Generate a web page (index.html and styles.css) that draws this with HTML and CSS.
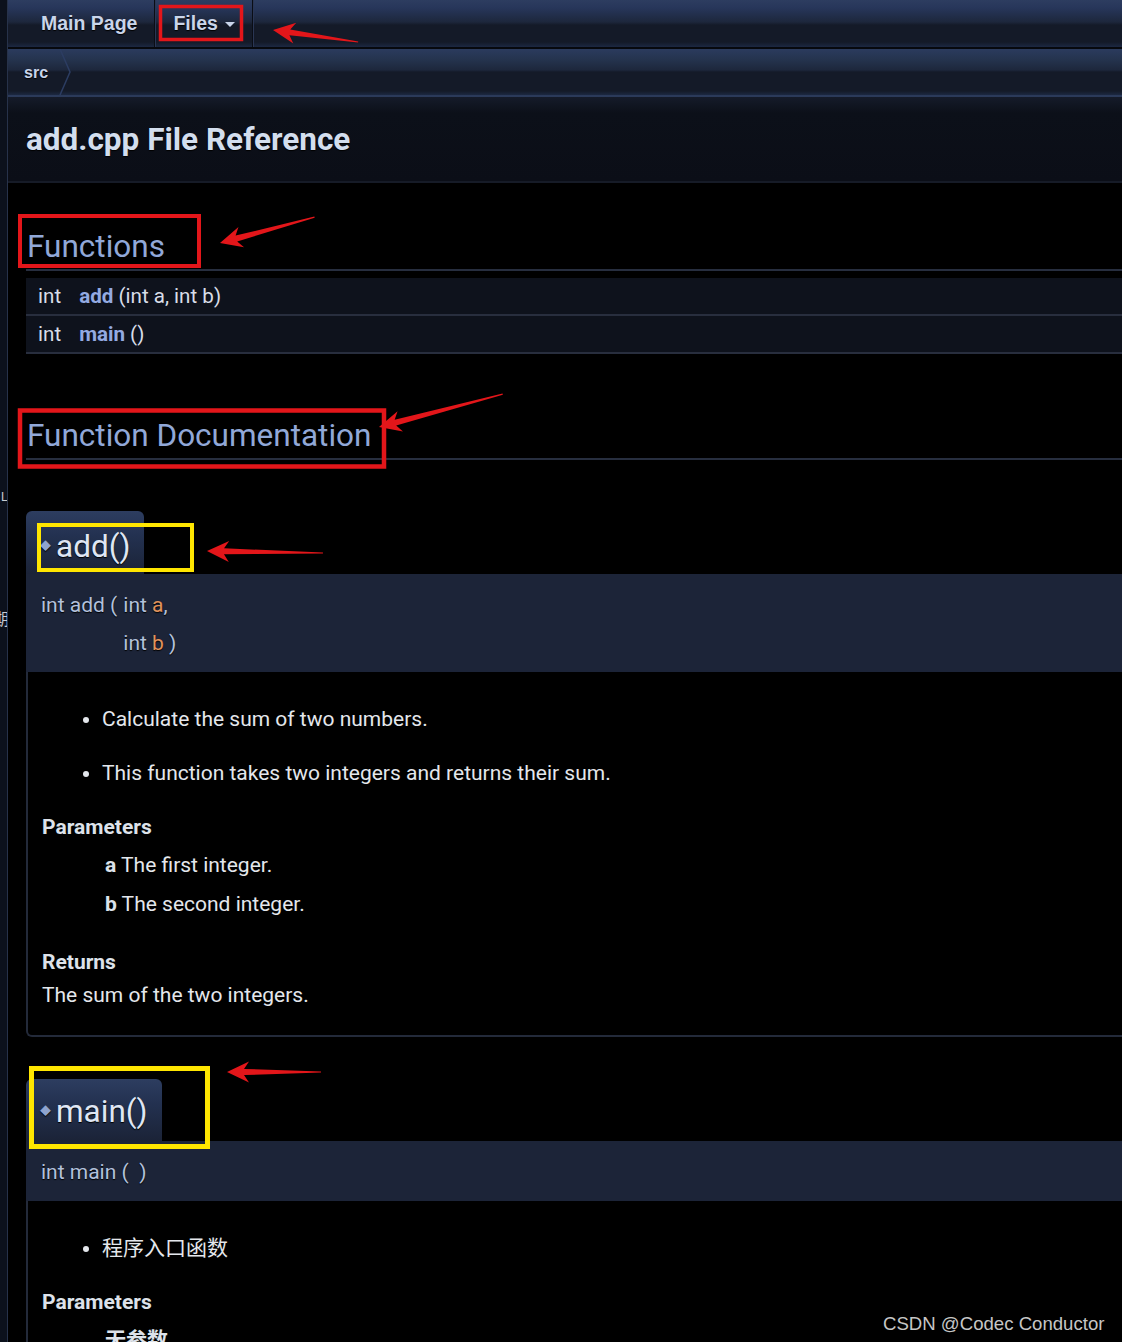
FILE: index.html
```html
<!DOCTYPE html>
<html lang="en">
<head>
<meta charset="utf-8">
<title>add.cpp File Reference</title>
<link rel="stylesheet" href="styles.css">
</head>
<body>
<div class="page">
  <aside class="side">
    <span class="side-l">L</span>
    <span class="side-c">期</span>
  </aside>
  <div class="main">
    <nav class="navbar">
      <a class="tab tab-main">Main Page</a>
      <a class="tab tab-files">Files <span class="caret"></span></a>
    </nav>
    <div class="crumbs">
      <span class="crumb">src</span>
      <svg class="chev" width="14" height="46" viewBox="0 0 14 46"><polyline points="3,0 13,23 3,46" fill="none" stroke="#2c3d62" stroke-width="1.5"/></svg>
    </div>
    <div class="header">
      <h1 class="title">add.cpp File Reference</h1>
    </div>
    <div class="contents">
      <h2 class="groupheader g-func">Functions</h2>
      <table class="memberdecls">
        <tr><td class="mleft">int</td><td class="mright"><b class="mname">add</b> (int a, int b)</td></tr>
        <tr><td class="mleft">int</td><td class="mright"><b class="mname">main</b> ()</td></tr>
      </table>

      <h2 class="groupheader g-doc">Function Documentation</h2>

      <div class="memitem m-add">
        <h3 class="memtitle"><span class="permalink">◆</span>add()</h3>
        <div class="memproto">
          <div class="protogrid">
            <span class="pt">int add (</span><span>int <em class="pname">a</em>,</span>
            <span></span><span>int <em class="pname">b</em> )</span>
          </div>
        </div>
        <div class="memdoc">
          <ul class="bul">
            <li>Calculate the sum of two numbers.</li>
            <li>This function takes two integers and returns their sum.</li>
          </ul>
          <dl class="params">
            <dt>Parameters</dt>
            <dd>
              <div class="prow"><b>a</b> The first integer.</div>
              <div class="prow"><b>b</b> The second integer.</div>
            </dd>
          </dl>
          <dl class="ret">
            <dt>Returns</dt>
            <dd>The sum of the two integers.</dd>
          </dl>
        </div>
      </div>

      <div class="memitem m-main">
        <h3 class="memtitle"><span class="permalink">◆</span>main()</h3>
        <div class="memproto">
          <div class="protoline">int main (&nbsp; )</div>
        </div>
        <div class="memdoc">
          <ul class="bul">
            <li>程序入口函数</li>
          </ul>
          <dl class="params">
            <dt>Parameters</dt>
            <dd>
              <div class="prow"><b>无参数</b></div>
            </dd>
          </dl>
        </div>
      </div>
    </div>
  </div>
</div>

<svg class="annot" width="1122" height="1342" viewBox="0 0 1122 1342">
  <g fill="none" stroke="#e3161a">
    <rect x="160.5" y="6.5" width="81" height="33" stroke-width="3.5"/>
    <rect x="20" y="216" width="179" height="50" stroke-width="4"/>
    <rect x="20" y="410.5" width="364" height="56" stroke-width="4.5"/>
  </g>
  <g fill="none" stroke="#ffe600">
    <rect x="39" y="525" width="153" height="45" stroke-width="4"/>
    <rect x="31.5" y="1068.5" width="176" height="78" stroke-width="5"/>
  </g>
  <g fill="#e3161a">
    <polygon transform="translate(273,30) rotate(8.04)" points="0,0 22,-10.5 17,-3 86,-0.6 86,0.6 17,3 22,10.5"/>
    <polygon transform="translate(220,243) rotate(-15.3)" points="0,0 22,-10.5 17,-3 98,-0.6 98,0.6 17,3 22,10.5"/>
    <polygon transform="translate(379,427) rotate(-14.9)" points="0,0 22,-10.5 17,-3 128,-0.6 128,0.6 17,3 22,10.5"/>
    <polygon transform="translate(207,551) rotate(1)" points="0,0 22,-10.5 17,-3 116,-0.6 116,0.6 17,3 22,10.5"/>
    <polygon transform="translate(227,1072) rotate(0)" points="0,0 22,-10.5 17,-3 94,-0.6 94,0.6 17,3 22,10.5"/>
  </g>
</svg>

<div class="watermark">CSDN @Codec Conductor</div>
</body>
</html>
```
FILE: styles.css
```css
html, body {
  margin: 0;
  padding: 0;
  background: #000;
}
body {
  position: relative;
  width: 1122px;
  height: 1342px;
  overflow: hidden;
  font-family: Roboto, "Noto Sans CJK SC", sans-serif;
  color: #e4e7ec;
}
.page {
  display: flex;
  min-height: 1342px;
}

/* left strip */
.side {
  width: 7px;
  flex: none;
  background: #0c111c;
  border-right: 1px solid #27324a;
  overflow: hidden;
  display: flex;
  flex-direction: column;
  color: #c9ccd2;
  font-size: 12px;
  line-height: 16px;
  white-space: nowrap;
}
.side-l {
  margin-top: 489px;
  margin-left: 1px;
}
.side-c {
  margin-top: 107px;
  margin-left: -7px;
  font-size: 16px;
}

.main {
  flex: 1;
  min-width: 0;
}

/* nav */
.navbar {
  height: 47px;
  display: flex;
  background: linear-gradient(#2d3d60 0, #27365a 8px, #1d273c 22px, #141a28 25px, #141a28 42px, #1c2842 47px);
  border-bottom: 2px solid #07090e;
  font-family: "Liberation Sans", Arial, sans-serif;
  font-weight: bold;
  font-size: 19.5px;
}
.tab {
  display: flex;
  align-items: center;
  color: #c9d5ea;
  text-shadow: 0 1px 1px #000;
  border-right: 1px solid #0a0d15;
  box-shadow: 1px 0 0 #2a3654;
  padding-bottom: 4px;
}
.tab-main {
  padding: 0 17px 0 33px;
}
.tab-files {
  padding: 0 17px 0 18px;
}
.caret {
  display: inline-block;
  margin-left: 7px;
  margin-top: 2px;
  border-left: 5px solid transparent;
  border-right: 5px solid transparent;
  border-top: 5px solid #c9d5ea;
}

/* breadcrumb */
.crumbs {
  height: 46px;
  display: flex;
  align-items: center;
  background: linear-gradient(#2b3b5e 0, #25344f 10px, #1d273c 21px, #141a28 23px, #141a28 42px, #1c2842 46px);
  border-bottom: 2px solid #2b3a5a;
  font-family: "Liberation Sans", Arial, sans-serif;
  font-weight: bold;
  font-size: 16px;
}
.crumb {
  color: #c9d5ea;
  text-shadow: 0 1px 1px #000;
  padding-left: 16px;
  padding-top: 2px;
  margin-right: 9px;
}
.chev {
  display: block;
}

/* header */
.header {
  height: 86px;
  background: linear-gradient(#151b2a 0, #0c1019 16px, #0b0e17 100%);
  border-bottom: 2px solid #161b27;
  padding-left: 18px;
  box-sizing: border-box;
  padding-top: 24px;
}
.title {
  margin: 0;
  font-size: 31.5px;
  line-height: 37px;
  font-weight: bold;
  color: #d3deee;
  text-shadow: 0 1px 1px #000;
}

/* contents */
.contents {
  padding-left: 18px;
}
.groupheader {
  margin: 0;
  font-weight: normal;
  font-size: 31.5px;
  line-height: 37px;
  color: #91a8d8;
  padding: 0 0 4px 1px;
  border-bottom: 2px solid #272e3f;
}
.g-func {
  margin-top: 45px;
}
.g-doc {
  margin-top: 63px;
}

.memberdecls {
  width: 100%;
  border-collapse: collapse;
  margin-top: 7px;
  font-size: 20.6px;
  color: #d8dde8;
}
.memberdecls td {
  height: 36px;
  background: #0e121c;
  border-bottom: 2px solid #282e3e;
  padding: 0;
  white-space: nowrap;
}
.mleft {
  width: 1px;
  padding: 0 18px 0 12px !important;
}
.mname {
  color: #93aae2;
}

/* member items */
.memitem.m-add {
  margin-top: 51px;
}
.memitem.m-main {
  margin-top: 42px;
}
.memtitle {
  display: inline-flex;
  align-items: center;
  margin: 0;
  font-weight: normal;
  font-size: 31.5px;
  line-height: 37px;
  color: #dfe6f4;
  text-shadow: 0 1px 1px #000;
  background: linear-gradient(#2d3d60 0, #233150 40%, #1b2337 100%);
  border-top-left-radius: 6px;
  border-top-right-radius: 6px;
  padding: 17px 14px 9px 14px;
}
.m-main .memtitle {
  padding-top: 14px;
  padding-bottom: 11px;
}
.permalink {
  font-size: 11px;
  color: #8ea4cf;
  margin-right: 5px;
}
.memproto {
  background: #1c2438;
  padding: 12px 15px 10px 15px;
  font-size: 21px;
  line-height: 38px;
  color: #b3c1dc;
  text-shadow: 0 1px 1px #000;
}
.protogrid {
  display: grid;
  grid-template-columns: auto 1fr;
}
.pt {
  padding-right: 6px;
}
.pname {
  font-style: normal;
  color: #e0935c;
}
.memdoc {
  border-left: 2px solid #232a3a;
  border-bottom: 2px solid #232a3a;
  border-bottom-left-radius: 6px;
  padding: 34px 14px 27px 14px;
  font-size: 21px;
  line-height: 26px;
  color: #e4e7ec;
}
.bul {
  margin: 0 0 28px 0;
  padding-left: 60px;
}
.bul li + li {
  margin-top: 28px;
}
.params, .ret {
  margin: 0;
}
.params dt, .ret dt {
  font-weight: bold;
  color: #dde2ea;
}
.params dd {
  margin: 12px 0 0 63px;
  display: flex;
  flex-direction: column;
  gap: 13px;
}
.prow b {
  color: #dde2ea;
}
.ret {
  margin-top: 32px;
}
.ret dd {
  margin: 7px 0 0 0;
}

/* annotations */
.annot {
  position: absolute;
  left: 0;
  top: 0;
  pointer-events: none;
}
.watermark {
  position: absolute;
  left: 883px;
  top: 1312px;
  font-family: "Liberation Sans", Arial, sans-serif;
  font-size: 18.6px;
  line-height: 24px;
  color: #c6c6c6;
  white-space: nowrap;
}
```
